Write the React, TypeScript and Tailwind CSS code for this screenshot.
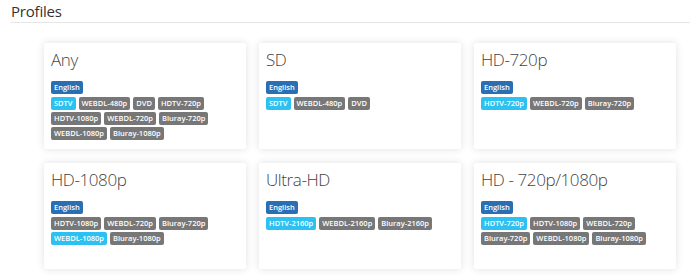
const profiles: { name: string; qualities: { label: string; active?: boolean }[] }[] = [
  {
    name: 'Any',
    qualities: [
      { label: 'SDTV', active: true },
      { label: 'WEBDL-480p' },
      { label: 'DVD' },
      { label: 'HDTV-720p' },
      { label: 'HDTV-1080p' },
      { label: 'WEBDL-720p' },
      { label: 'Bluray-720p' },
      { label: 'WEBDL-1080p' },
      { label: 'Bluray-1080p' },
    ],
  },
  {
    name: 'SD',
    qualities: [{ label: 'SDTV', active: true }, { label: 'WEBDL-480p' }, { label: 'DVD' }],
  },
  {
    name: 'HD-720p',
    qualities: [{ label: 'HDTV-720p', active: true }, { label: 'WEBDL-720p' }, { label: 'Bluray-720p' }],
  },
  {
    name: 'HD-1080p',
    qualities: [
      { label: 'HDTV-1080p' },
      { label: 'WEBDL-720p' },
      { label: 'Bluray-720p' },
      { label: 'WEBDL-1080p', active: true },
      { label: 'Bluray-1080p' },
    ],
  },
  {
    name: 'Ultra-HD',
    qualities: [{ label: 'HDTV-2160p', active: true }, { label: 'WEBDL-2160p' }, { label: 'Bluray-2160p' }],
  },
  {
    name: 'HD - 720p/1080p',
    qualities: [
      { label: 'HDTV-720p', active: true },
      { label: 'HDTV-1080p' },
      { label: 'WEBDL-720p' },
      { label: 'Bluray-720p' },
      { label: 'WEBDL-1080p' },
      { label: 'Bluray-1080p' },
    ],
  },
];

function Label({ children, color }: { children: string; color: string }) {
  return (
    <span
      className={`inline-flex items-center h-[13px] px-[3px] rounded-[2px] text-[7.5px] font-semibold text-white leading-none ${color}`}
    >
      {children}
    </span>
  );
}

export default function App() {
  return (
    <div className="w-[690px] h-[275px] bg-white overflow-hidden font-['Open_Sans',sans-serif] text-[#333]">
      <div className="ml-[11px] border-b border-[#e5e5e5] h-[23px]">
        <h1 className="text-[15px] leading-[22px] font-normal tracking-[-0.2px]">Profiles</h1>
      </div>
      <div className="pl-[44px] pt-[20px] grid grid-cols-[202px_202px_202px] gap-x-[13px] gap-y-[14px]">
        {profiles.map((p) => (
          <div
            key={p.name}
            className="h-[106px] bg-white rounded-[2px] shadow-[0_0_8px_rgba(0,0,0,0.12)] px-[7px] pt-[6px]"
          >
            <h2 className="text-[17px] leading-[22px] font-light text-[#444] tracking-[-0.4px]">{p.name}</h2>
            <div className="mt-[10px] flex">
              <Label color="bg-[#2a6fb4]">English</Label>
            </div>
            <div className="mt-[3px] flex flex-wrap gap-x-[3px] gap-y-[2px]">
              {p.qualities.map((q) => (
                <Label key={q.label} color={q.active ? 'bg-[#2cc1f1]' : 'bg-[#777]'}>
                  {q.label}
                </Label>
              ))}
            </div>
          </div>
        ))}
      </div>
    </div>
  );
}
